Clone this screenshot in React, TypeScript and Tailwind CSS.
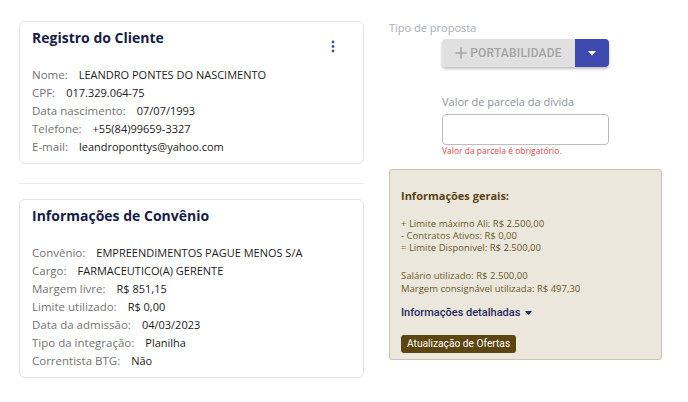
import React from "react";

const P = { fontFamily: '"Open Sans", "Noto Sans", sans-serif' };
const R = { fontFamily: 'Roboto, "Liberation Sans", sans-serif' };

function Row({ label, value }: { label: string; value: string }) {
  return (
    <div className="flex items-baseline h-[18px] leading-[18px]">
      <span className="text-[11.5px] text-[#737373]">{label}</span>
      <span className="ml-[11px] text-[11px] text-[#1c1c1c]">{value}</span>
    </div>
  );
}

function Kebab() {
  return (
    <svg width="6" height="14" viewBox="0 0 6 14" className="mt-[13px] mr-[15px]">
      <circle cx="3" cy="2" r="1.4" fill="#4350b0" />
      <circle cx="3" cy="6.5" r="1.4" fill="#4350b0" />
      <circle cx="3" cy="11" r="1.4" fill="#4350b0" />
    </svg>
  );
}

export default function App() {
  return (
    <div className="w-[688px] h-[402px] bg-white flex overflow-hidden" style={P}>
      {/* Left column */}
      <div className="w-[345px] ml-[19px] pt-[21px]">
        <div className="border border-[#e3e3e3] rounded-[6px] pt-[5px] px-[12px] pb-[7px]">
          <div className="flex justify-between items-start h-[22px]">
            <h2 className="text-[14px] leading-[22px] font-bold text-[#171c47]">Registro do Cliente</h2>
            <Kebab />
          </div>
          <div className="mt-[17px]">
            <Row label="Nome:" value="LEANDRO PONTES DO NASCIMENTO" />
            <Row label="CPF:" value="017.329.064-75" />
            <Row label="Data nascimento:" value="07/07/1993" />
            <Row label="Telefone:" value="+55(84)99659-3327" />
            <Row label="E-mail:" value="leandroponttys@yahoo.com" />
          </div>
        </div>
        <div className="mt-[19px] h-px bg-[#ececec]" />
        <div className="mt-[15px] border border-[#e3e3e3] rounded-[6px] pt-[5px] px-[12px] pb-[7px]">
          <h2 className="text-[14px] leading-[22px] font-bold text-[#171c47]">Informações de Convênio</h2>
          <div className="mt-[17px]">
            <Row label="Convênio:" value="EMPREENDIMENTOS PAGUE MENOS S/A" />
            <Row label="Cargo:" value="FARMACEUTICO(A) GERENTE" />
            <Row label="Margem livre:" value="R$ 851,15" />
            <Row label="Limite utilizado:" value="R$ 0,00" />
            <Row label="Data da admissão:" value="04/03/2023" />
            <Row label="Tipo da integração:" value="Planilha" />
            <Row label="Correntista BTG:" value="Não" />
          </div>
        </div>
      </div>

      {/* Right column */}
      <div className="w-[273px] ml-[25px] pt-[21px]">
        <div className="text-[11px] leading-[14px] text-[#a9adb5]">Tipo de proposta</div>
        <div className="mt-[4px] flex justify-center">
          <div className="flex h-[28px] rounded-[4px] shadow-[0_2px_3px_rgba(0,0,0,0.25)] overflow-hidden">
            <div className="w-[133px] bg-[#e0e0e0] flex items-center justify-center gap-[3px] text-[#a4a4a4]" style={R}>
              <svg width="12" height="12" viewBox="0 0 12 12">
                <path d="M6 0.5 V11.5 M0.5 6 H11.5" stroke="#a4a4a4" strokeWidth="1.6" />
              </svg>
              <span className="text-[12px] font-medium tracking-[0.2px]">PORTABILIDADE</span>
            </div>
            <div className="w-[34px] bg-[#3f4ab1] flex items-center justify-center">
              <svg width="8" height="5" viewBox="0 0 8 5">
                <path d="M0 0 L8 0 L4 4.5 Z" fill="#ffffff" />
              </svg>
            </div>
          </div>
        </div>

        <div className="w-[167px] mx-auto mt-[28px]">
          <div className="text-[11px] leading-[14px] text-[#8e929a]">Valor de parcela da divida</div>
          <div className="mt-[5px] h-[31px] border border-[#bdbdbd] rounded-[4px] bg-white" />
          <div className="mt-[1px] text-[8.5px] leading-[10px] text-[#e0474c]">Valor da parcela é obrigatório.</div>
        </div>

        <div className="mt-[13px] h-[191px] bg-[#ebe7dd] border border-[#cdc3a8] rounded-[3px] pt-[18px] pl-[11px]">
          <div className="text-[11px] leading-[16px] font-bold text-[#5a4314]">Informações gerais:</div>
          <div className="mt-[14px] text-[9.5px] leading-[12px] text-[#6e5a28]">
            <div>+ Limite máximo Ali: R$ 2.500,00</div>
            <div>- Contratos Ativos: R$ 0,00</div>
            <div>= Limite Disponivel: R$ 2.500,00</div>
          </div>
          <div className="mt-[15px] text-[9.5px] leading-[13px] text-[#6e5a28]">
            <div>Salário utilizado: R$ 2.500,00</div>
            <div>Margem consignável utilizada: R$ 497,30</div>
          </div>
          <div className="mt-[10px] h-[16px] flex items-center gap-[5px] text-[11px] font-medium text-[#1f2a5c]" style={R}>
            <span>Informações detalhadas</span>
            <svg width="7" height="4" viewBox="0 0 7 4">
              <path d="M0 0 L7 0 L3.5 4 Z" fill="#1f2a5c" />
            </svg>
          </div>
          <div className="mt-[8px]">
            <span className="inline-flex items-center h-[18px] px-[6px] rounded-[3px] bg-[#5c4510] text-white text-[10.2px]" style={R}>
              Atualização de Ofertas
            </span>
          </div>
        </div>
      </div>
    </div>
  );
}
